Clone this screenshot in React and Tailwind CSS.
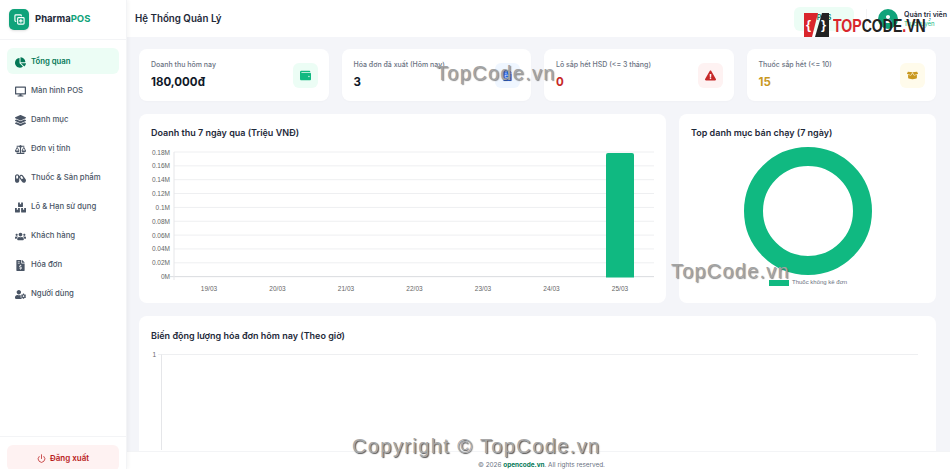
import {
  FaChartPie,
  FaDesktop,
  FaLayerGroup,
  FaBalanceScale,
  FaCapsules,
  FaBoxes,
  FaUsers,
  FaFileInvoiceDollar,
  FaUserCog,
  FaWallet,
  FaFileInvoice,
  FaExclamationTriangle,
  FaBoxOpen,
  FaUser,
} from "react-icons/fa";
import { LuPower, LuCopyPlus } from "react-icons/lu";

const menu = [
  { label: "Tổng quan", icon: FaChartPie, active: true },
  { label: "Màn hình POS", icon: FaDesktop },
  { label: "Danh mục", icon: FaLayerGroup },
  { label: "Đơn vị tính", icon: FaBalanceScale },
  { label: "Thuốc & Sản phẩm", icon: FaCapsules },
  { label: "Lô & Hạn sử dụng", icon: FaBoxes },
  { label: "Khách hàng", icon: FaUsers },
  { label: "Hóa đơn", icon: FaFileInvoiceDollar },
  { label: "Người dùng", icon: FaUserCog },
];

const stats = [
  { label: "Doanh thu hôm nay", value: "180,000đ", color: "text-gray-900", icon: FaWallet, box: "bg-[#ecfdf5] text-[#10b981]" },
  { label: "Hóa đơn đã xuất (Hôm nay)", value: "3", color: "text-gray-900", icon: FaFileInvoice, box: "bg-[#eff6ff] text-[#2563eb]" },
  { label: "Lô sắp hết HSD (<= 3 tháng)", value: "0", color: "text-[#c62828]", icon: FaExclamationTriangle, box: "bg-[#fef2f2] text-[#c62828]" },
  { label: "Thuốc sắp hết (<= 10)", value: "15", color: "text-[#c9981f]", icon: FaBoxOpen, box: "bg-[#fffbeb] text-[#c9981f]" },
];

const yLabels = ["0.18M", "0.16M", "0.14M", "0.12M", "0.1M", "0.08M", "0.06M", "0.04M", "0.02M", "0M"];
const days = ["19/03", "20/03", "21/03", "22/03", "23/03", "24/03", "25/03"];

function Sidebar() {
  return (
    <aside className="w-[127px] shrink-0 h-full bg-white border-r border-gray-100 shadow-[1px_0_4px_rgba(0,0,0,0.05)] flex flex-col z-10">
      <div className="h-[40px] shrink-0 flex items-center gap-[6px] pl-[9px] border-b border-gray-100">
        <div className="w-[20px] h-[21px] rounded-[5px] bg-[#10a37a] flex items-center justify-center text-white shadow-sm">
          <LuCopyPlus size={11} strokeWidth={2.5} />
        </div>
        <span className="text-[9.5px] font-bold text-gray-800">
          Pharma<span className="text-[#10a37a]">POS</span>
        </span>
      </div>
      <nav className="flex-1 flex flex-col gap-[3px] px-[7px] pt-[8px]">
        {menu.map((m) => (
          <div
            key={m.label}
            className={`h-[26px] rounded-[6px] flex items-center gap-[5px] pl-[8px] pt-[2px] text-[7.75px] ${
              m.active ? "bg-[#ecfdf5] text-[#047857] font-semibold" : "text-gray-600 font-medium"
            }`}
          >
            <span className="w-[11px] flex justify-center">
              <m.icon size={11} />
            </span>
            {m.label}
          </div>
        ))}
      </nav>
      <div className="h-[33px] shrink-0 border-t border-gray-100 px-[7px] pt-[8px]">
        <div className="h-[26px] rounded-[6px] bg-[#fef2f2] text-[#b91c1c] flex items-center justify-center gap-[4px] text-[8px] font-semibold">
          <LuPower size={9} />
          Đăng xuất
        </div>
      </div>
    </aside>
  );
}

function Header() {
  return (
    <header className="h-[37px] shrink-0 bg-white flex items-center justify-between pl-[8px]">
      <h1 className="text-[9.75px] font-semibold text-gray-800 pt-[1px]">Hệ Thống Quản Lý</h1>
      <div className="flex items-center">
        <div className="w-[60px] h-[24px] rounded-[6px] bg-[#ecfdf5] text-[#047857] text-[7px] font-semibold flex items-center justify-center">
          POS
        </div>
        <div className="w-px h-[20px] bg-gray-100 ml-[12px] mr-[11px]" />
        <div className="w-[20px] h-[20px] rounded-full bg-[#10a37a] flex items-center justify-center text-white">
          <FaUser size={8} />
        </div>
        <div className="w-[46px] ml-[6px] leading-[9px] overflow-hidden whitespace-nowrap">
          <div className="text-[7px] font-semibold text-gray-800">Quản trị viên</div>
          <div className="text-[6px] text-[#10b981]">Trực tuyến</div>
        </div>
      </div>
    </header>
  );
}

function StatCard({ s }) {
  return (
    <div className="flex-1 h-[52px] bg-white rounded-[8px] flex items-center justify-between pl-[12px] pr-[11px] shadow-[0_1px_2px_rgba(0,0,0,0.02)]">
      <div className="min-w-0">
        <div className="text-[7px] font-medium text-gray-500 whitespace-nowrap mb-[4px]">{s.label}</div>
        <div className={`text-[11.5px] leading-[15px] font-bold ${s.color}`}>{s.value}</div>
      </div>
      <div className={`w-[25px] h-[25px] shrink-0 rounded-[6px] flex items-center justify-center ${s.box}`}>
        <s.icon size={11} />
      </div>
    </div>
  );
}

function BarChart() {
  return (
    <svg width="527" height="160" viewBox="0 0 527 160" className="block">
      {yLabels.map((l, i) => {
        const y = 11 + i * 13.85;
        return (
          <g key={l}>
            <line x1={i === 9 ? 31 : 35} x2="515" y1={y} y2={y} stroke={i === 9 ? "#d9dbdf" : "#eeeff1"} strokeWidth="1" />
            <text x="31" y={y + 2.5} textAnchor="end" fontSize="6.5" fontFamily="Liberation Sans, sans-serif" fill="#666">
              {l}
            </text>
          </g>
        );
      })}
      <line x1="35" x2="35" y1="11" y2="139" stroke="#e5e6e9" strokeWidth="1" />
      <rect x="467" y="12" width="28" height="124" rx="2" fill="#10b981" />
      <rect x="467" y="130" width="28" height="6.5" fill="#10b981" />
      {days.map((d, i) => (
        <text key={d} x={70 + i * 68.5} y="150" textAnchor="middle" fontSize="6.5" fontFamily="Liberation Sans, sans-serif" fill="#666">
          {d}
        </text>
      ))}
    </svg>
  );
}

function Donut() {
  return (
    <div className="flex flex-col items-center">
      <svg width="130" height="130" viewBox="0 0 130 130" className="block">
        <circle cx="65" cy="65" r="54.5" fill="none" stroke="#10b981" strokeWidth="19" />
      </svg>
      <div className="flex items-center gap-[3px] mt-[2px] ml-[1px]">
        <span className="w-[20px] h-[6px] bg-[#10b981]" />
        <span className="text-[6px] text-gray-500 font-['Liberation_Sans',sans-serif]">Thuốc không kê đơn</span>
      </div>
    </div>
  );
}

function HourlyChart() {
  return (
    <svg width="797" height="101" viewBox="0 0 797 101" className="block">
      <line x1="19" x2="779" y1="5.5" y2="5.5" stroke="#eeeff1" strokeWidth="1" />
      <line x1="22.5" x2="22.5" y1="5.5" y2="101" stroke="#e5e6e9" strokeWidth="1" />
      <text x="17" y="8" textAnchor="end" fontSize="6.5" fontFamily="Liberation Sans, sans-serif" fill="#666">
        1
      </text>
    </svg>
  );
}

function Watermarks() {
  const soft = "absolute whitespace-nowrap font-['Liberation_Sans',sans-serif]";
  return (
    <>
      <div className={`${soft} left-[436px] top-[58px] text-[20px] tracking-[1.3px] text-[#a3a3a3] [text-shadow:1px_1px_1px_rgba(60,60,60,0.6)]`}>TopCode.vn</div>
      <div className={`${soft} left-[671px] top-[256px] text-[20px] tracking-[1.2px] text-[#a3a3a3] [text-shadow:1px_1px_1px_rgba(60,60,60,0.6)]`}>TopCode.vn</div>
      <div className={`${soft} left-[352px] top-[431px] text-[20px] tracking-[1.4px] text-[#a8a8a8] [text-shadow:1px_1px_1px_rgba(40,40,40,0.8)]`}>Copyright © TopCode.vn</div>
      <div className="absolute left-[803px] top-[12px] flex items-center">
        <svg width="27" height="26" viewBox="0 0 27 26">
          <path d="M1 1h14L9 25H1z" fill="#d9262c" />
          <path d="M19 1h7v24H12z" fill="#222" />
          <text x="3" y="17" fontSize="13" fontWeight="700" fill="#fff" fontFamily="Liberation Sans, sans-serif">{"{"}</text>
          <text x="18" y="17" fontSize="13" fontWeight="700" fill="#fff" fontFamily="Liberation Sans, sans-serif">{"}"}</text>
        </svg>
        <span className="ml-[3px] w-[93px] text-[19px] leading-none font-bold whitespace-nowrap font-['Liberation_Sans',sans-serif] origin-left [transform:scale(0.74,1)]">
          <span className="text-[#d9262c]">TOP</span>
          <span className="text-[#222]">CODE</span>
          <span className="text-[#d9262c]">.</span>
          <span className="text-[#222]">VN</span>
        </span>
      </div>
    </>
  );
}

export default function App() {
  return (
    <div className="relative w-[950px] h-[469px] overflow-hidden flex bg-[#f4f5f9] font-['Inter',sans-serif]">
      <Sidebar />
      <div className="flex-1 min-w-0 flex flex-col">
        <Header />
        <main className="flex-1 min-h-0 overflow-hidden pl-[12px] pt-[12px] pr-[14px] flex flex-col gap-[13px]">
          <div className="flex gap-[13px] shrink-0">
            {stats.map((s) => (
              <StatCard key={s.label} s={s} />
            ))}
          </div>
          <div className="flex gap-[13px] shrink-0 h-[189px]">
            <section className="w-[527px] bg-white rounded-[8px] pt-[12px]">
              <h2 className="pl-[12px] text-[9px] leading-[14px] font-semibold text-gray-800 mb-[1px]">Doanh thu 7 ngày qua (Triệu VNĐ)</h2>
              <BarChart />
            </section>
            <section className="flex-1 bg-white rounded-[8px] pt-[12px]">
              <h2 className="pl-[12px] text-[9px] leading-[14px] font-semibold text-gray-800">Top danh mục bán chạy (7 ngày)</h2>
              <div className="mt-[6px]">
                <Donut />
              </div>
            </section>
          </div>
          <section className="shrink-0 h-[200px] bg-white rounded-[8px] pt-[13px]">
            <h2 className="pl-[12px] text-[9px] leading-[14px] font-semibold text-gray-800 mb-[6px]">Biến động lượng hóa đơn hôm nay (Theo giờ)</h2>
            <HourlyChart />
          </section>
        </main>
        <footer className="h-[18px] shrink-0 bg-white border-t border-gray-100 flex items-end justify-center pl-[6px] text-[6.4px] leading-[7px] text-gray-500">
          <span>
            © 2026 <span className="font-bold text-[#047857]">opencode.vn</span>. All rights reserved.
          </span>
        </footer>
      </div>
      <Watermarks />
    </div>
  );
}
